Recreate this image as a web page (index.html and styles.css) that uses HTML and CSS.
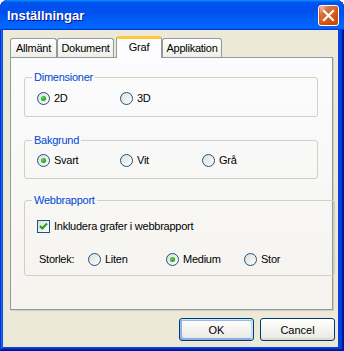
FILE: index.html
```html
<!DOCTYPE html>
<html lang="sv">
<head>
    <meta charset="UTF-8">
    <title>Inställningar</title>
    <link rel="stylesheet" href="styles.css">
</head>
<body>

<div class="window">
    <div class="title-bar">
        <span class="title">Inställningar</span>
        <div class="close-btn">
            <svg width="13" height="13" viewBox="0 0 13 13">
                <path d="M2 2 L11 11 M11 2 L2 11" stroke="#fff" stroke-width="2.2" stroke-linecap="square"/>
            </svg>
        </div>
    </div>

    <div class="window-body">
        <div class="tabs">
            <div class="tab tab-allmant">Allmänt</div>
            <div class="tab tab-dokument">Dokument</div>
            <div class="tab tab-graf active">Graf</div>
            <div class="tab tab-applikation">Applikation</div>
        </div>

        <div class="panel">
            <fieldset class="group group-dim">
                <legend>Dimensioner</legend>
                <div class="choices">
                    <span class="radio checked"><span class="circle"></span>2D</span>
                    <span class="radio"><span class="circle"></span>3D</span>
                </div>
            </fieldset>

            <fieldset class="group group-bg">
                <legend>Bakgrund</legend>
                <div class="choices">
                    <span class="radio checked"><span class="circle"></span>Svart</span>
                    <span class="radio"><span class="circle"></span>Vit</span>
                    <span class="radio"><span class="circle"></span>Grå</span>
                </div>
            </fieldset>

            <fieldset class="group group-web">
                <legend>Webbrapport</legend>
                <span class="checkbox">
                    <span class="box">
                        <svg width="11" height="11" viewBox="0 0 11 11">
                            <path d="M2 5 L4.3 7.5 L9 2.5" fill="none" stroke="#21a121" stroke-width="2"/>
                        </svg>
                    </span>
                    Inkludera grafer i webbrapport
                </span>
                <div class="size-row">
                    <span class="size-label">Storlek:</span>
                    <span class="radio"><span class="circle"></span>Liten</span>
                    <span class="radio checked"><span class="circle"></span>Medium</span>
                    <span class="radio"><span class="circle"></span>Stor</span>
                </div>
            </fieldset>
        </div>

        <div class="buttons">
            <button class="btn default">OK</button>
            <button class="btn">Cancel</button>
        </div>
    </div>
</div>

</body>
</html>
```

FILE: styles.css
```css
body {
    margin: 0;
    padding: 0;
    font-family: 'Liberation Sans', Arial, sans-serif;
    font-size: 11px;
    letter-spacing: -0.25px;
    color: #000;
    background: #fff;
}
.window {
    width: 344px;
    height: 351px;
    box-sizing: border-box;
    display: flex;
    flex-direction: column;
    padding: 0 6px 4px 3px;
    background: #0842d8;
    border-radius: 8px 8px 0 0;
    box-shadow: inset -1px -1px #00138c, inset 1px 1px #0831d9, inset -2px -2px #001ea0, inset 2px 2px #166aee, inset -3px -3px #003bda, inset 3px 3px #0855dd;
}
.title-bar {
    height: 30px;
    margin: 0 -6px 0 -3px;
    padding: 0 5px 0 7px;
    display: flex;
    align-items: center;
    justify-content: space-between;
    border-radius: 8px 8px 0 0;
    background: linear-gradient(180deg, #0997ff, #0053ee 8%, #0050ee 40%, #06f 88%, #06f 93%, #005bff 95%, #003dd7 96%, #003dd7);
}
.title {
    color: #fff;
    font-weight: bold;
    font-size: 13px;
    letter-spacing: 0;
    text-shadow: 1px 1px #0f1089;
    margin-top: 1px;
}
.close-btn {
    width: 21px;
    height: 21px;
    box-sizing: border-box;
    border: 1px solid #fff;
    border-radius: 3px;
    display: flex;
    align-items: center;
    justify-content: center;
    background: radial-gradient(circle at 90% 90%, #cc4600 0, #dc6527 55%, #cd7546 70%, #ffccb2 90%, #fff 100%);
    box-shadow: inset 0 -1px 2px 1px #da4600;
}
.window-body {
    flex: 1;
    background: #ece9d8;
    padding: 6px 3px 6px 7px;
    display: flex;
    flex-direction: column;
}
.tabs {
    display: flex;
    align-items: flex-end;
    height: 21px;
    position: relative;
    z-index: 1;
}
.tab {
    box-sizing: border-box;
    height: 19px;
    padding-top: 3px;
    text-align: center;
    border: 1px solid #919b9c;
    border-bottom: none;
    border-radius: 3px 3px 0 0;
    background: linear-gradient(180deg, #fff, #fafaf9 26%, #f0f0ea 95%, #ecebe6);
}
.tab-allmant { width: 47px; }
.tab-dokument { width: 57px; }
.tab-applikation { width: 60px; }
.tab.active {
    width: 46px;
    height: 22px;
    margin: 0 0 -1px 2px;
    padding-top: 2px;
    background: #fcfcfe;
    border-top: 3px solid #ffc83c;
    box-shadow: inset 0 -1px #fcfcfe;
}
.panel {
    box-sizing: border-box;
    width: 323px;
    height: 253px;
    border: 1px solid #919b9c;
    box-shadow: 1px 1px #d0cec2;
    background: linear-gradient(180deg, #fcfcfe, #f4f3ee);
    padding: 13px 14px 0 13px;
}
.group {
    margin: 0;
    border: 1px solid #d0d0bf;
    border-radius: 3px;
    padding: 0 12px;
    line-height: 13px;
}
.group legend {
    color: #0046d5;
    padding: 0 2px;
    margin-left: -5px;
    line-height: 13px;
}
.group-dim {
    padding-top: 8px;
    padding-bottom: 11px;
}
.group-bg {
    margin-top: 17px;
    padding-top: 7px;
    padding-bottom: 11px;
}
.group-web {
    margin-top: 15px;
    padding-top: 13px;
    padding-bottom: 9px;
}
.choices {
    display: grid;
    grid-template-columns: 83px 82px auto;
}
.radio {
    display: inline-flex;
    align-items: center;
    gap: 4px;
    height: 13px;
}
.circle {
    width: 13px;
    height: 13px;
    box-sizing: border-box;
    border-radius: 50%;
    border: 1px solid #1d5281;
    background: linear-gradient(135deg, #dcdcd7, #fff);
    display: flex;
    align-items: center;
    justify-content: center;
}
.radio.checked .circle::after {
    content: "";
    width: 5px;
    height: 5px;
    border-radius: 50%;
    background: radial-gradient(circle at 40% 40%, #5ee45e, #21a121 60%, #1a8a1a);
}
.checkbox {
    display: flex;
    align-items: center;
    gap: 4px;
    height: 13px;
}
.box {
    width: 13px;
    height: 13px;
    box-sizing: border-box;
    border: 1px solid #1d5281;
    background: linear-gradient(135deg, #dcdcd7, #fff);
    display: flex;
    align-items: center;
    justify-content: center;
}
.size-row {
    display: flex;
    align-items: center;
    margin-top: 20px;
    height: 13px;
}
.size-label {
    width: 49px;
    margin-left: 2px;
}
.size-row .radio {
    width: 78px;
}
.buttons {
    display: flex;
    justify-content: flex-end;
    gap: 6px;
    margin-top: 8px;
}
.btn {
    width: 75px;
    height: 23px;
    font-family: 'Liberation Sans', Arial, sans-serif;
    font-size: 11px;
    color: #000;
    border: 1px solid #003c74;
    border-radius: 3px;
    background: linear-gradient(180deg, #fff, #ecebe6 86%, #d6d0c5);
    padding: 0;
}
.btn.default {
    box-shadow: inset -1px 1px #cee7ff, inset 1px 2px #98b8ea, inset -2px 2px #bcd4f6, inset 1px -1px #89ade4, inset 2px -2px #89ade4;
}
```
